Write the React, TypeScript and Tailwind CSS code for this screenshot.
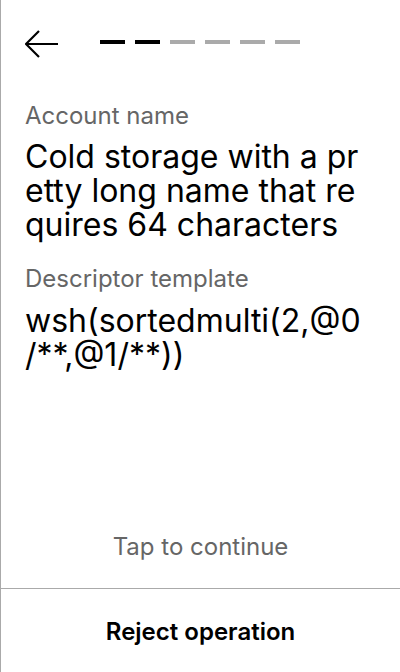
import React from "react";

const font = { fontFamily: "Inter, 'Noto Sans', sans-serif" };

export default function App() {
  const steps = [true, true, false, false, false, false];
  return (
    <div
      className="w-[400px] h-[672px] bg-white border-l border-[#aaaaaa] flex flex-col text-black overflow-hidden"
      style={font}
    >
      <div className="flex items-center h-[86px] pl-[24px] pt-[2px]">
        <svg width="34" height="30" viewBox="0 0 34 30" className="shrink-0">
          <path d="M1 15 H33 M14 2 L1 15 L14 28" fill="none" stroke="#000" strokeWidth="2.2" />
        </svg>
        <div className="flex gap-[10px] ml-[41px] -mt-[4px]">
          {steps.map((on, i) => (
            <div
              key={i}
              className={on ? "w-[25px] h-[4px] bg-black" : "w-[25px] h-[4px] bg-[#aaaaaa]"}
            />
          ))}
        </div>
      </div>
      <div className="flex-1 px-[24px] flex flex-col">
        <div className="text-[24px] leading-[28px] text-[#666666] mt-[16px]">Account name</div>
        <div className="text-[32px] leading-[34px] whitespace-nowrap mt-[10px]">
          Cold storage with a pr
          <br />
          etty long name that re
          <br />
          quires 64 characters
        </div>
        <div className="text-[24px] leading-[28px] text-[#666666] mt-[23px]">Descriptor template</div>
        <div className="text-[32px] leading-[34px] whitespace-nowrap mt-[11px]">
          wsh(sortedmulti(2,@0
          <br />
          /**,@1/**))
        </div>
      </div>
      <div className="text-center text-[24px] leading-[28px] text-[#666666] pb-[27px]">Tap to continue</div>
      <div className="border-t border-[#aaaaaa] h-[84px] flex items-center justify-center pt-[3px]">
        <span className="text-[24px] leading-[28px] font-semibold">Reject operation</span>
      </div>
    </div>
  );
}
